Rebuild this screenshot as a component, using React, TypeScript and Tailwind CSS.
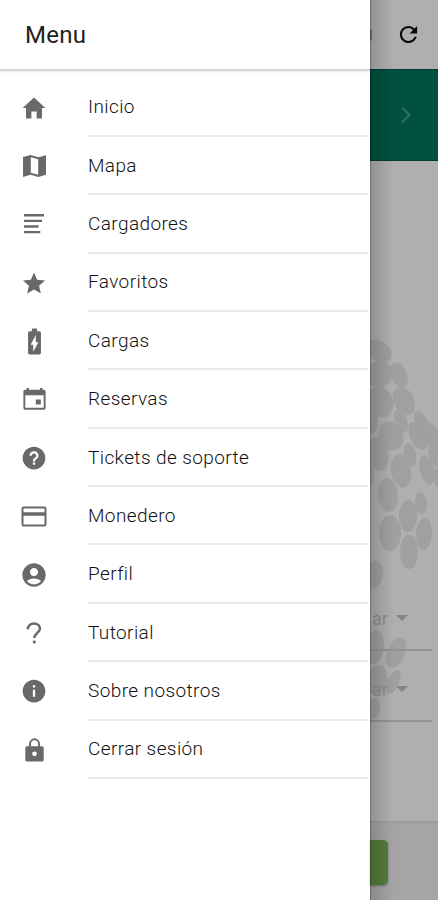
import type { ReactNode } from "react";
import { IoMdHome, IoMdStar, IoMdHelpCircle, IoMdInformationCircle, IoMdRefresh } from "react-icons/io";
import { MdAccountCircle, MdBatteryChargingFull } from "react-icons/md";

function LinesIcon() {
  return (
    <svg width="20" height="20" viewBox="0 0 20 20" fill="currentColor">
      <path d="M0 0h20v2.4H0zM0 5.700h18v2.400H0zM0 11.300h14.500v2.400H0zM0 16.900h16.300v2.400H0z" />
    </svg>
  );
}

function MapIcon() {
  return (
    <svg width="23" height="22" viewBox="0 0 23 22" fill="currentColor">
      <path fillRule="evenodd" d="M0 2 7.500 0l8 2.300L23 .300V19.800l-7.500 2.200-8-2.300L0 22zM7.800 2.200v15.600l7.400 2V4.300z" />
    </svg>
  );
}

function CalendarIcon() {
  return (
    <svg width="23" height="22" viewBox="0 0 23 22" fill="currentColor">
      <path fillRule="evenodd" d="M3.500 0h2.500v1.800h11V0h2.500v1.800H21q1.600 0 1.600 1.600V20q0 1.700-1.600 1.700H2Q.4 21.700.4 20V3.400Q.4 1.800 2 1.800h1.500zM2.300 7.300V19.800h18.400V7.300z" />
      <path d="M12.800 11.500h5v5h-5z" />
    </svg>
  );
}

function CardIcon() {
  return (
    <svg width="26" height="21" viewBox="0 0 26 21" fill="currentColor">
      <path fillRule="evenodd" d="M2.500.5h21q2 0 2 2v16q0 2-2 2h-21q-2 0-2-2v-16q0-2 2-2zM2.500 2.500v3.700h21V2.500zM2.500 9.700v8.800h21V9.700z" />
    </svg>
  );
}

function QuestionIcon() {
  return (
    <svg width="16" height="22" viewBox="0 0 16 22" fill="none" stroke="currentColor" strokeWidth="2.500">
      <path d="M1.800 7.300C1.800 3.700 4.500 1.500 7.900 1.500S14 3.700 14 6.800C14 10.500 8.300 11.200 8.300 16" />
      <path d="M6.900 20h2.800" strokeWidth="2.800" />
    </svg>
  );
}

function LockIcon() {
  return (
    <svg width="19" height="24" viewBox="0 0 19 24" fill="none">
      <path d="M5 9V5.800a4.500 4.500 0 0 1 9 0V9" stroke="currentColor" strokeWidth="1.900" />
      <path fill="currentColor" fillRule="evenodd" d="M2 8.200h15q1.700 0 1.700 1.700v12q0 1.700-1.700 1.700H2q-1.700 0-1.700-1.700v-12q0-1.700 1.700-1.700zM9.500 13.400a2.400 2.400 0 1 0 0 4.800 2.400 2.400 0 0 0 0-4.800z" />
    </svg>
  );
}

const items: { label: string; icon: ReactNode }[] = [
  { label: "Inicio", icon: <IoMdHome size={28} /> },
  { label: "Mapa", icon: <MapIcon /> },
  { label: "Cargadores", icon: <LinesIcon /> },
  { label: "Favoritos", icon: <IoMdStar size={28} /> },
  { label: "Cargas", icon: <MdBatteryChargingFull size={31} /> },
  { label: "Reservas", icon: <CalendarIcon /> },
  { label: "Tickets de soporte", icon: <IoMdHelpCircle size={28} /> },
  { label: "Monedero", icon: <CardIcon /> },
  { label: "Perfil", icon: <MdAccountCircle size={28} /> },
  { label: "Tutorial", icon: <QuestionIcon /> },
  { label: "Sobre nosotros", icon: <IoMdInformationCircle size={28} /> },
  { label: "Cerrar sesión", icon: <LockIcon /> },
];

// cx, cy, rx, ry, rotation
const cells = [
  [9, 351, 14, 10, 35], [9, 374, 14, 13, -30], [29, 375, 8, 13, -22], [10, 402, 13, 16, -25],
  [34, 401, 10, 15, -25], [31, 421, 6, 12, -22], [51, 421, 6, 11, -25], [2, 420, 6, 14, 0],
  [21, 436, 12, 15, -20], [48, 436, 8, 15, -25], [62, 436, 8, 14, -25], [8, 454, 10, 17, -15],
  [40, 455, 6, 12, -12], [31, 471, 10, 17, -10], [57, 470, 7, 15, -15],
  [65, 455, 6, 12, -15], [67, 477, 3, 10, 0], [18, 495, 10, 17, -5], [0, 476, 4, 12, 0],
  [51, 503, 6, 11, -5], [38, 516, 9, 16, 0], [54, 534, 8, 16, 3], [20, 533, 11, 18, 0],
  [39, 552, 9, 17, 0], [4, 575, 9, 14, 10], [5, 647, 9, 17, 5], [26, 653, 9, 16, 20],
  [7, 680, 10, 15, 12], [23, 682, 6, 13, 25], [3, 709, 7, 11, 15],
];

function SelectField() {
  return (
    <div className="flex h-[71px] w-[62px] items-end border-b-2 border-[#949494] pb-[20px] pl-[2px]">
      <span className="h-[21px] w-[24px] text-[18px] leading-[21px] text-[#8e8e8e]">ar</span>
      <span className="mb-[8px] border-x-[6px] border-t-[6px] border-x-transparent border-t-[#858585]" />
    </div>
  );
}

export default function App() {
  return (
    <div className="relative flex h-[900px] w-[438px] overflow-hidden bg-[#afafaf] font-['Roboto',sans-serif]">
      <aside className="flex w-[370px] shrink-0 flex-col bg-white">
        <header className="flex h-[71px] shrink-0 items-center border-b-2 border-[#d5d5d5] pl-[25px] text-[24px] tracking-[0.3px] text-[#222] shadow-[0_1px_2px_rgba(0,0,0,0.08)]">
          Menu
        </header>
        <nav className="flex flex-col pt-[7.400px]">
          {items.map(({ label, icon }) => (
            <div key={label} className="flex h-[58.380px] shrink-0">
              <div className="flex w-[68px] items-center justify-center text-[#696969]">{icon}</div>
              <div className="ml-[20px] mr-[2px] flex flex-1 items-center border-b-2 border-[#ebebeb] pt-[2px] text-[19px] font-light tracking-[0.4px] text-[#111]">
                {label}
              </div>
            </div>
          ))}
        </nav>
      </aside>
      <main className="relative flex w-[68px] flex-col">
        <svg className="absolute inset-0" width="68" height="900" fill="#a0a0a0">
          {cells.map(([cx, cy, rx, ry, r], i) => (
            <ellipse key={i} cx={cx} cy={cy} rx={rx} ry={ry} transform={`rotate(${r} ${cx} ${cy})`} />
          ))}
        </svg>
        <div className="flex h-[69px] items-center justify-end pr-[17px] text-[#090909]">
          <IoMdRefresh size={25} />
        </div>
        <div className="flex h-[92px] items-center border-y border-[#003c30] bg-[#005140] pl-[29px]">
          <svg width="14" height="18" viewBox="0 0 14 18" fill="none" stroke="#2f7061" strokeWidth="2">
            <path d="m3 1.500 7.500 7.500L3 16.500" />
          </svg>
        </div>
        <div className="relative h-[660px] pt-[419px]">
          <SelectField />
          <SelectField />
        </div>
        <footer className="relative flex-1 border-t-2 border-[#9d9d9d] bg-[#a5a5a5] pt-[17px]">
          <div className="h-[45px] w-[18px] rounded-r-[5px] bg-[#557d3d] shadow-[0_1px_2px_rgba(0,0,0,0.3)]" />
        </footer>
        <div className="absolute top-[29px] left-0 h-[12px] w-[2px] rounded-r-full bg-[#777]" />
        <div className="absolute inset-y-0 left-0 w-[24px] bg-linear-to-r from-black/18 via-black/8 to-transparent" />
        <div className="absolute inset-y-0 left-0 w-px bg-black/20" />
      </main>
    </div>
  );
}
